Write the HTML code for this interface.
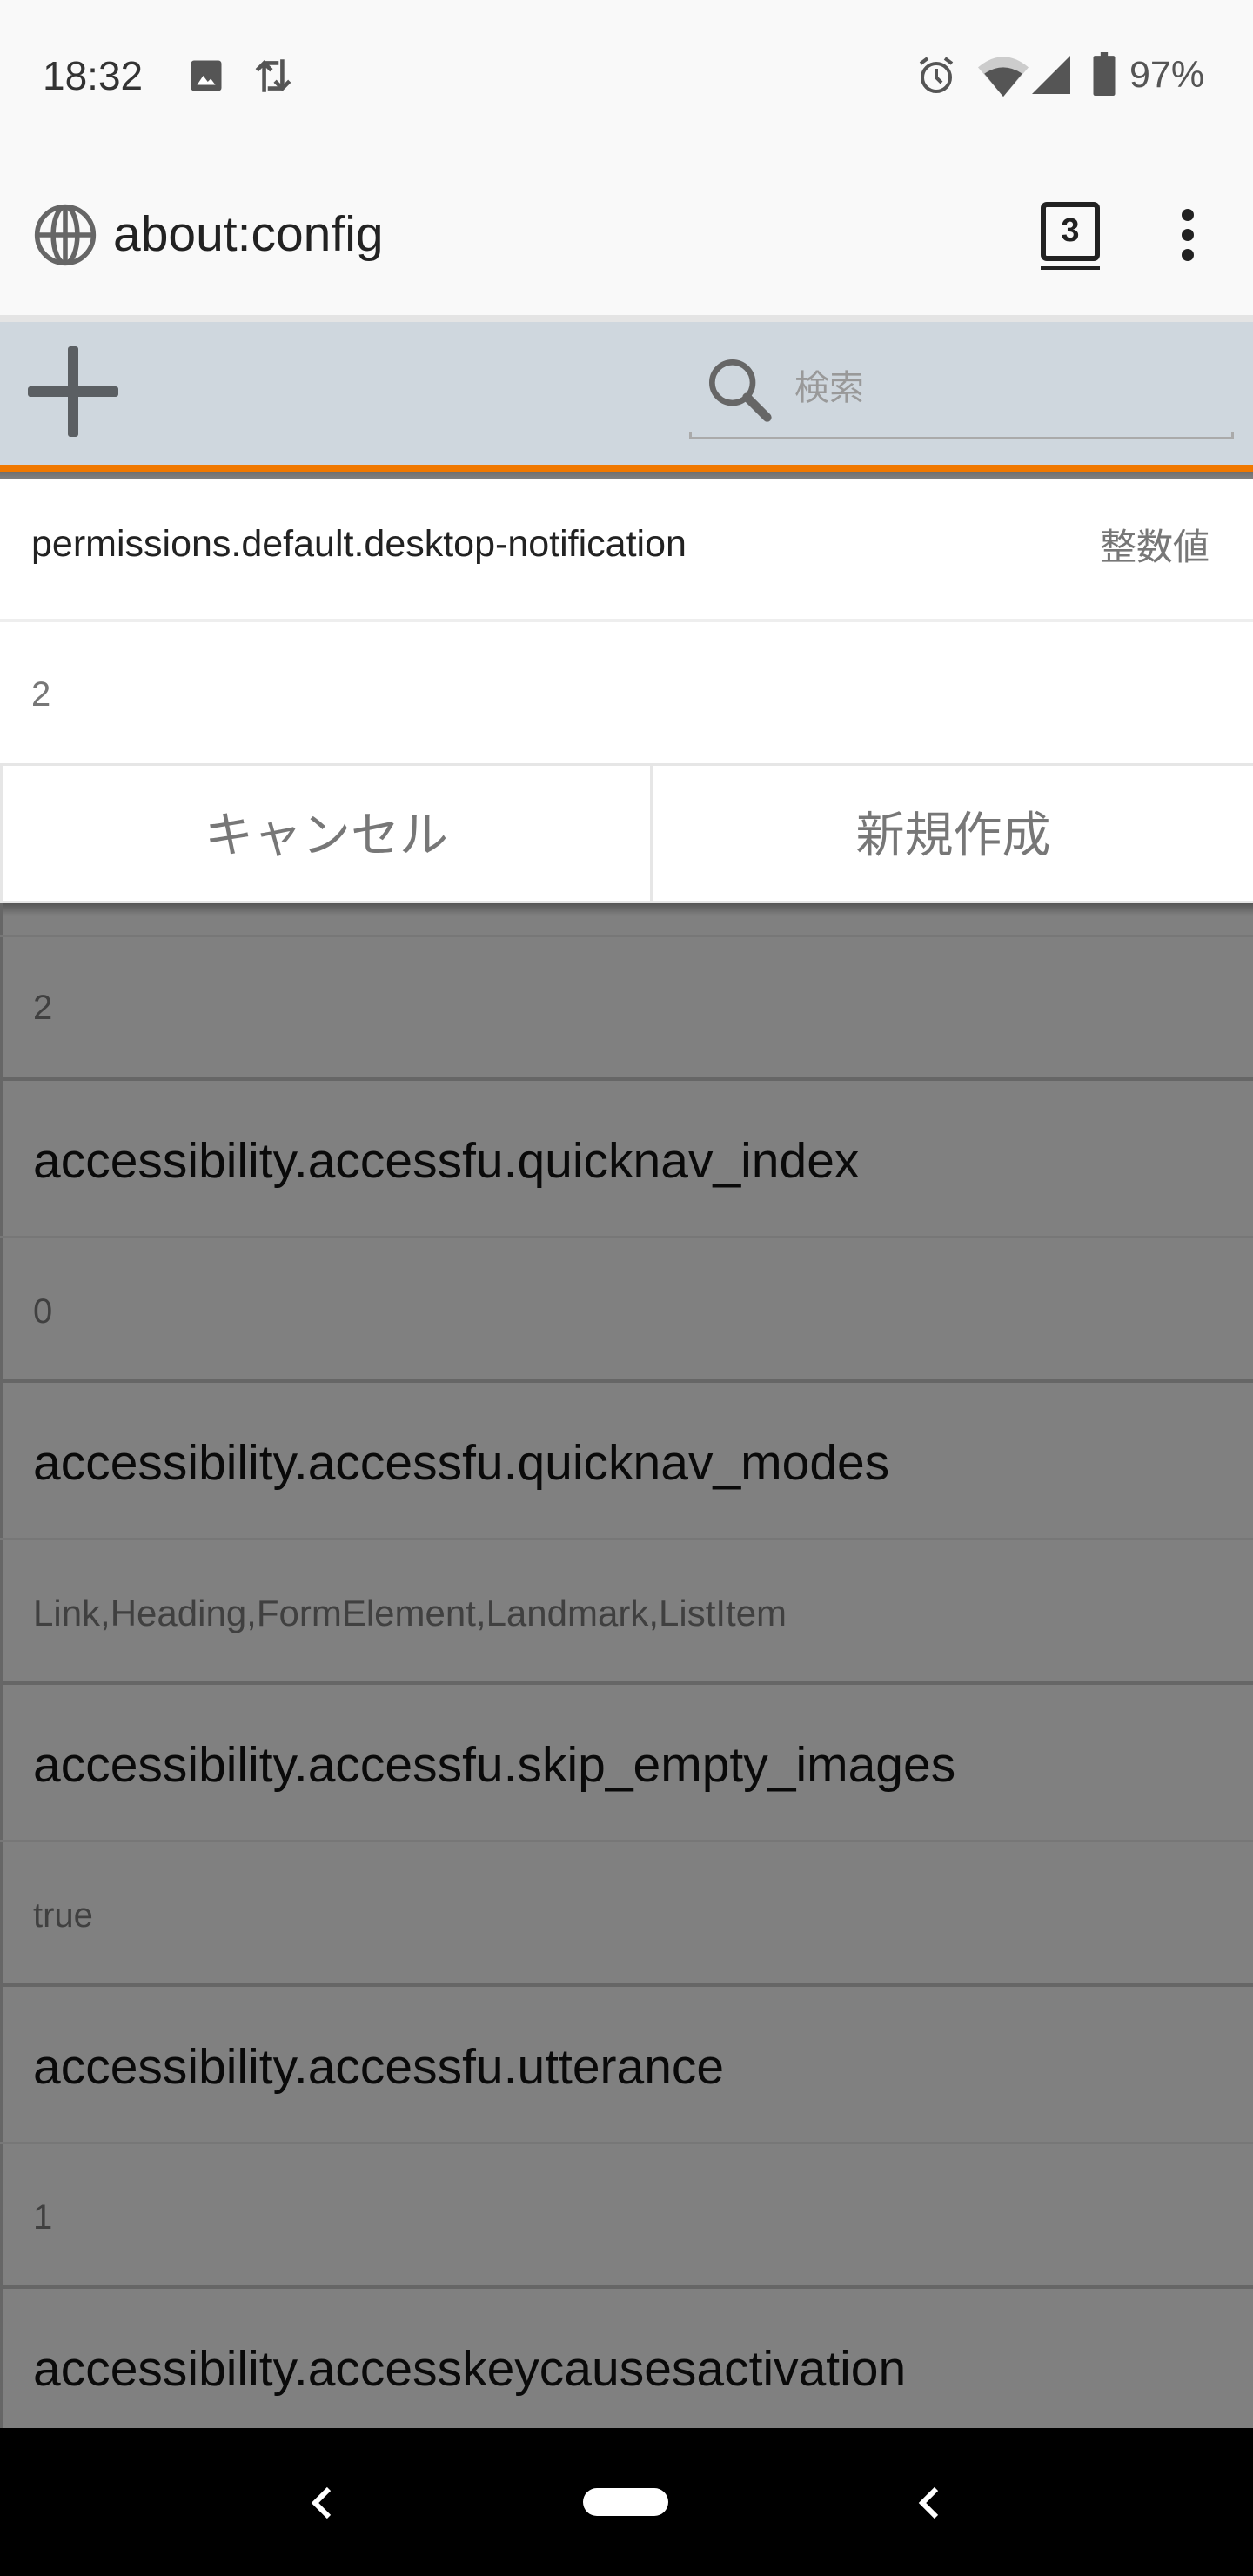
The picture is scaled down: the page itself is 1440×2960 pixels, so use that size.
<!DOCTYPE html>
<html><head><meta charset="utf-8">
<style>
*{margin:0;padding:0;box-sizing:border-box}
body{width:1440px;height:2960px;overflow:hidden;position:relative;background:#808080;font-family:"Liberation Sans","Noto Sans CJK JP",sans-serif}
.a{position:absolute}
.t{position:absolute;white-space:nowrap;line-height:1}
</style></head><body>
<div class="a" style="left:0;top:0;width:1440px;height:362px;background:#f9f9f9"></div>
<div class="t" style="left:49px;top:64px;font-size:46px;color:#333">18:32</div>
<svg class="a" style="left:216px;top:66px" width="42" height="42" viewBox="0 0 24 24"><rect x="2" y="2" width="20" height="20" rx="2" fill="#555"/><path d="M6 18l4-6 3 4 2-2 3 4z" fill="#fff"/></svg>
<svg class="a" style="left:286px;top:62px" width="56" height="50" viewBox="0 0 24 24" fill="none" stroke="#555" stroke-width="2.2"><path d="M7 21V5M3 9l4-4 4 4M7 5h8M17 3v16M13 15l4 4 4-4M17 19H9"/></svg>
<svg class="a" style="left:1052px;top:62px" width="48" height="50" viewBox="0 0 24 24" fill="none" stroke="#555" stroke-width="2"><circle cx="12" cy="13" r="8"/><path d="M12 8v5l3 3M3 5l4-3M21 5l-4-3"/></svg>
<svg class="a" style="left:1124px;top:62px" width="58" height="50" viewBox="0 0 24 20"><path d="M0 6Q12-4 24 6L12 20z" fill="#ccc"/><path d="M3 9Q12 3 21 9L12 20z" fill="#555"/></svg>
<svg class="a" style="left:1186px;top:64px" width="44" height="44" viewBox="0 0 24 24"><path d="M24 0V24H0z" fill="#555"/></svg>
<svg class="a" style="left:1255px;top:60px" width="28" height="50" viewBox="0 0 12 24"><rect x="4" y="0" width="4" height="3" fill="#555"/><rect x="0" y="2" width="12" height="22" rx="1" fill="#555"/></svg>
<div class="t" style="left:1298px;top:65px;font-size:43px;color:#555">97%</div>
<svg class="a" style="left:38px;top:233px" width="74" height="74" viewBox="0 0 24 24" fill="none" stroke="#666" stroke-width="1.8"><circle cx="12" cy="12" r="10.5"/><ellipse cx="12" cy="12" rx="4.5" ry="10.5"/><path d="M12 1.5v21M1.5 12h21"/></svg>
<div class="t" style="left:130px;top:241px;font-size:57px;color:#222">about:config</div>
<div class="a" style="left:1196px;top:232px;width:68px;height:68px;border:6px solid #222;border-radius:7px"></div>
<div class="t" style="left:1196px;top:246px;width:68px;text-align:center;font-size:38px;font-weight:bold;color:#222">3</div>
<div class="a" style="left:1196px;top:306px;width:68px;height:4px;background:#222"></div>
<div class="a" style="left:1358px;top:240px;width:14px;height:14px;border-radius:7px;background:#222"></div>
<div class="a" style="left:1358px;top:263px;width:14px;height:14px;border-radius:7px;background:#222"></div>
<div class="a" style="left:1358px;top:286px;width:14px;height:14px;border-radius:7px;background:#222"></div>
<div class="a" style="left:0;top:362px;width:1440px;height:8px;background:#e4e4e4"></div>
<div class="a" style="left:0;top:370px;width:1440px;height:164px;background:#cfd7de"></div>
<div class="a" style="left:32px;top:444px;width:104px;height:12px;background:#5b5f63;border-radius:3px"></div>
<div class="a" style="left:78px;top:398px;width:12px;height:104px;background:#5b5f63;border-radius:3px"></div>
<svg class="a" style="left:810px;top:408px" width="80" height="80" viewBox="0 0 24 24" fill="none" stroke="#666" stroke-width="2"><circle cx="9.5" cy="9.5" r="7"/><path d="M14.5 14.5l7 7" stroke-width="3" stroke-linecap="round"/></svg>
<div class="t" style="left:913px;top:426px;font-size:40px;color:#999">検索</div>
<div class="a" style="left:792px;top:496px;width:626px;height:9px;border:3px solid #aaa;border-top:none"></div>
<div class="a" style="left:0;top:534px;width:1440px;height:8px;background:#f07800"></div>
<div class="a" style="left:0;top:542px;width:1440px;height:8px;background:linear-gradient(#0002,#0000)"></div>
<div class="a" style="left:0;top:550px;width:1440px;height:161px;background:#fff"></div>
<div class="t" style="left:36px;top:604px;font-size:43px;color:#222">permissions.default.desktop-notification</div>
<div class="t" style="left:1264px;top:608px;font-size:42px;color:#777">整数値</div>
<div class="a" style="left:0;top:711px;width:1440px;height:4px;background:#eee"></div>
<div class="a" style="left:0;top:715px;width:1440px;height:162px;background:#fff"></div>
<div class="t" style="left:36px;top:778px;font-size:40px;color:#777">2</div>
<div class="a" style="left:0;top:877px;width:1440px;height:161px;background:#e6e6e6"></div>
<div class="a" style="left:3px;top:880px;width:744px;height:155px;background:#fff"></div>
<div class="a" style="left:751px;top:880px;width:689px;height:155px;background:#fff"></div>
<div class="t" style="left:3px;top:932px;width:744px;text-align:center;font-size:56px;color:#777">キャンセル</div>
<div class="t" style="left:751px;top:932px;width:689px;text-align:center;font-size:56px;color:#777">新規作成</div>
<div class="a" style="left:0;top:1038px;width:1440px;height:14px;background:linear-gradient(#0005,#0000)"></div>
<div class="a" style="left:0;top:1038px;width:3px;height:1752px;background:#666"></div>
<div class="a" style="left:0;top:1074px;width:1440px;height:3px;background:#777"></div>
<div class="t" style="left:38px;top:1138px;font-size:40px;color:#404040">2</div>
<div class="a" style="left:0;top:1238px;width:1440px;height:4px;background:#666"></div>
<div class="t" style="left:38px;top:1306px;font-size:57px;color:#0a0a0a">accessibility.accessfu.quicknav_index</div>
<div class="a" style="left:0;top:1420px;width:1440px;height:3px;background:#777"></div>
<div class="t" style="left:38px;top:1487px;font-size:40px;color:#404040">0</div>
<div class="a" style="left:0;top:1585px;width:1440px;height:4px;background:#666"></div>
<div class="t" style="left:38px;top:1653px;font-size:57px;color:#0a0a0a">accessibility.accessfu.quicknav_modes</div>
<div class="a" style="left:0;top:1767px;width:1440px;height:3px;background:#777"></div>
<div class="t" style="left:38px;top:1833px;font-size:42px;color:#404040">Link,Heading,FormElement,Landmark,ListItem</div>
<div class="a" style="left:0;top:1932px;width:1440px;height:4px;background:#666"></div>
<div class="t" style="left:38px;top:2000px;font-size:57px;color:#0a0a0a">accessibility.accessfu.skip_empty_images</div>
<div class="a" style="left:0;top:2114px;width:1440px;height:3px;background:#777"></div>
<div class="t" style="left:38px;top:2181px;font-size:40px;color:#404040">true</div>
<div class="a" style="left:0;top:2279px;width:1440px;height:4px;background:#666"></div>
<div class="t" style="left:38px;top:2347px;font-size:57px;color:#0a0a0a">accessibility.accessfu.utterance</div>
<div class="a" style="left:0;top:2461px;width:1440px;height:3px;background:#777"></div>
<div class="t" style="left:38px;top:2528px;font-size:40px;color:#404040">1</div>
<div class="a" style="left:0;top:2626px;width:1440px;height:4px;background:#666"></div>
<div class="t" style="left:38px;top:2694px;font-size:57px;color:#0a0a0a">accessibility.accesskeycausesactivation</div>
<div class="a" style="left:0;top:2790px;width:1440px;height:170px;background:#000"></div>
<svg class="a" style="left:356px;top:2856px" width="28" height="40" viewBox="0 0 14 20" fill="none" stroke="#fff" stroke-width="3"><path d="M11 2L3 10l8 8"/></svg>
<div class="a" style="left:670px;top:2859px;width:98px;height:32px;border-radius:16px;background:#fff"></div>
<svg class="a" style="left:1054px;top:2856px" width="28" height="40" viewBox="0 0 14 20" fill="none" stroke="#fff" stroke-width="3"><path d="M11 2L3 10l8 8"/></svg>
</body></html>
